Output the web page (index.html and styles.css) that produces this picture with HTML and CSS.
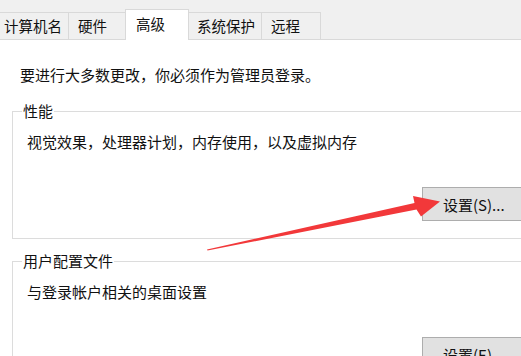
FILE: index.html
```html
<!doctype html>
<html lang="zh-CN">
<head>
    <meta charset="UTF-8">
    <title>系统属性 - 高级</title>
    <link rel="stylesheet" href="styles.css">
</head>
<body>
<div class="window">
    <div class="tabs">
        <div class="tab first">计算机名</div>
        <div class="tab">硬件</div>
        <div class="tab active">高级</div>
        <div class="tab">系统保护</div>
        <div class="tab">远程</div>
    </div>
    <div class="panel">
        <p class="intro">要进行大多数更改，你必须作为管理员登录。</p>
        <fieldset class="group">
            <legend>性能</legend>
            <p class="desc">视觉效果，处理器计划，内存使用，以及虚拟内存</p>
            <button class="btn">设置(S)...</button>
        </fieldset>
        <fieldset class="group">
            <legend>用户配置文件</legend>
            <p class="desc">与登录帐户相关的桌面设置</p>
            <button class="btn">设置(E)...</button>
        </fieldset>
    </div>
    <svg class="arrow" width="521" height="356" viewBox="0 0 521 356">
        <polygon points="207,249.5 414.5,203 413,196 440,201.5 421,216.5 416.5,209.5 207.5,250.5" fill="#f2383a"/>
    </svg>
</div>
</body>
</html>
```

FILE: styles.css
```css
* {
    box-sizing: border-box;
}

html, body {
    margin: 0;
    height: 100%;
    background: #fff;
}

body {
    overflow: hidden;
    font-family: "Noto Sans CJK SC", "Noto Sans", sans-serif;
    font-size: 15px;
    color: #111;
}

.window {
    position: relative;
    width: 521px;
    height: 356px;
    overflow: hidden;
}

.tabs {
    display: flex;
    align-items: flex-end;
    height: 40px;
    background: #f0f0f0;
    border-bottom: 1px solid #d9d9d9;
}

.tab {
    height: 27px;
    min-width: 60px;
    padding: 2px 6px 0 9px;
    border: 1px solid #d9d9d9;
    border-bottom: none;
    margin-right: -1px;
    font-size: 14.5px;
    line-height: 22px;
    white-space: nowrap;
}

.tab.first {
    margin-left: -5px;
    padding-left: 8px;
}

.tab.active {
    position: relative;
    z-index: 1;
    height: 31px;
    min-width: 64px;
    margin: 0 -2px -1px -2px;
    padding: 0 6px 0 10px;
    background: #fff;
    line-height: 28px;
}

.panel {
    padding: 0 0 0 12px;
}

p {
    margin: 0;
    line-height: 20px;
}

.intro {
    margin: 25px 0 16px 8px;
}

.group {
    margin: 0 -80px 12px 0;
    padding: 0 0 17px 14px;
    border: 1px solid #dcdcdc;
}

.group legend {
    margin-left: -5px;
    padding: 0 1px;
    line-height: 20px;
}

.desc {
    margin-top: 11px;
}

.btn {
    display: block;
    width: 112px;
    height: 34px;
    margin: 35px 0 0 395px;
    padding: 0 0 0 20px;
    text-align: left;
    font-family: inherit;
    font-size: 15px;
    color: #111;
    background: #e1e1e1;
    border: 1px solid #adadad;
}

.arrow {
    position: absolute;
    left: 0;
    top: 0;
    pointer-events: none;
}
```
